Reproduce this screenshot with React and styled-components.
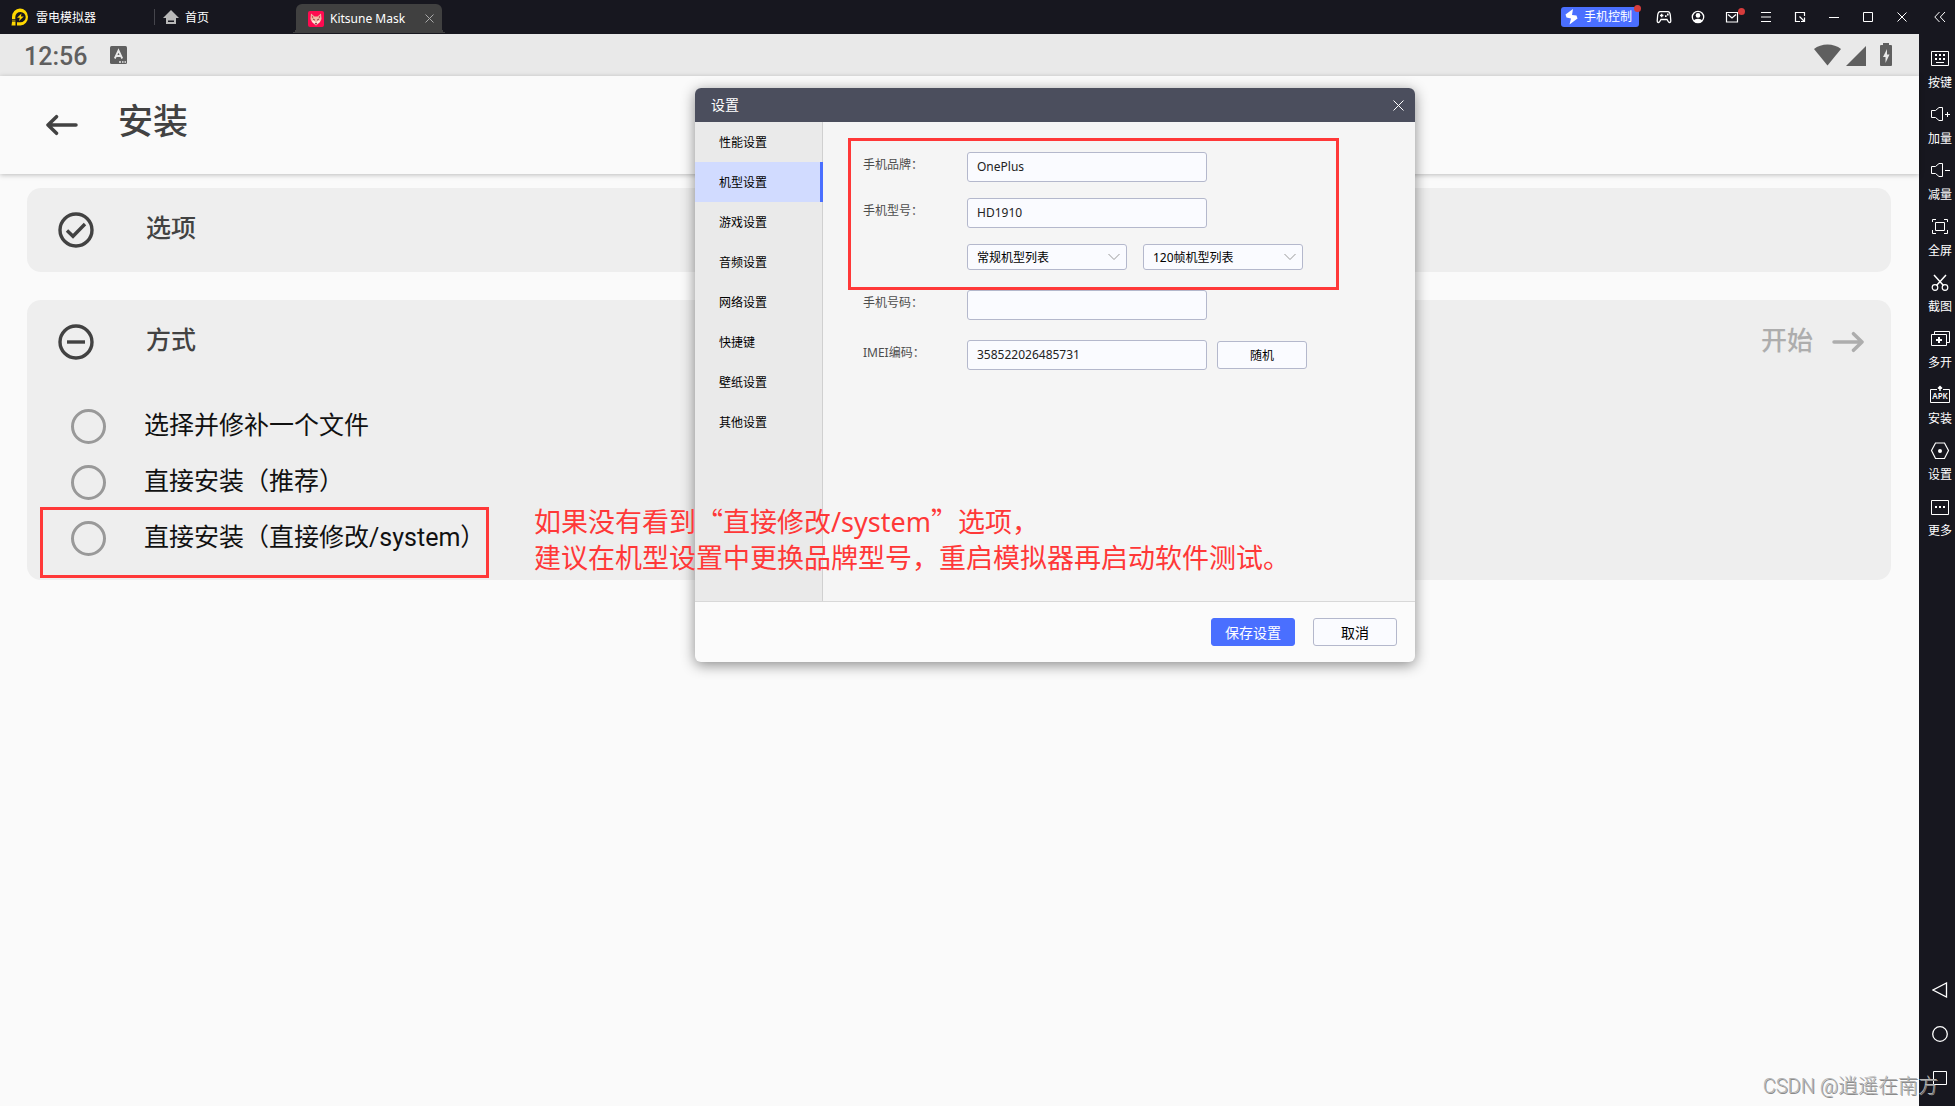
import React, { useState } from 'react';
import styled, { createGlobalStyle } from 'styled-components';

const GlobalStyle = createGlobalStyle`
  * {
    box-sizing: border-box;
  }
  body {
    margin: 0;
    background-color: #fafafa;
    font-family: 'Noto Sans', 'Noto Sans CJK SC', sans-serif;
    font-size: 12px;
  }
  button, input, select {
    font-family: inherit;
    font-size: inherit;
    margin: 0;
  }
  svg {
    display: block;
    flex-shrink: 0;
  }
`;

const Emulator = styled.div`
  position: relative;
  display: flex;
  min-height: 100vh;
  background-color: #17171f;
`;

const Main = styled.div`
  flex: 1;
  min-width: 0;
  display: flex;
  flex-direction: column;
`;

const TitleBar = styled.header`
  height: 34px;
  display: flex;
  align-items: center;
  justify-content: space-between;
  color: white;
`;

const Tabs = styled.div`
  display: flex;
  align-items: center;
  height: 34px;
`;

const Brand = styled.div`
  display: flex;
  align-items: center;
  gap: 7px;
  width: 155px;
  height: 16px;
  padding-left: 11px;
  border-right: 1px solid #45454c;
  line-height: 16px;
  span {
    padding-top: 2px;
  }
`;

const Tab = styled.button`
  display: flex;
  align-items: center;
  gap: 6px;
  width: 133px;
  height: 30px;
  padding: 0 8px;
  border: none;
  background: none;
  color: white;
  cursor: pointer;
`;

const ActiveTab = styled.div`
  position: relative;
  display: flex;
  align-items: center;
  align-self: flex-end;
  gap: 6px;
  width: 146px;
  height: 29px;
  margin: 0 0 1px 8px;
  padding: 0 8px 0 12px;
  border-radius: 6px 6px 0 0;
  background-color: #404040;
  white-space: nowrap;
  &::before, &::after {
    content: '';
    position: absolute;
    bottom: 0;
    width: 5px;
    height: 5px;
  }
  &::before {
    left: -5px;
    background: radial-gradient(circle at 0 0, transparent 5px, #404040 5px);
  }
  &::after {
    right: -5px;
    background: radial-gradient(circle at 100% 0, transparent 5px, #404040 5px);
  }
`;

const TabClose = styled.button`
  display: flex;
  margin-left: auto;
  padding: 0;
  border: none;
  background: none;
  color: #a9a9a9;
  cursor: pointer;
`;

const WindowActions = styled.div`
  display: flex;
  align-items: center;
`;

const PhoneControl = styled.button`
  position: relative;
  display: flex;
  align-items: center;
  gap: 6px;
  height: 20px;
  margin-right: 8px;
  padding: 0 7px 0 4px;
  border: none;
  border-radius: 3px;
  background-color: #4a6fff;
  color: white;
  line-height: 16px;
  cursor: pointer;
`;

const Dot = styled.span`
  position: absolute;
  top: ${({ $top }) => $top}px;
  right: ${({ $right }) => $right}px;
  width: 7px;
  height: 7px;
  border-radius: 50%;
  background-color: #d63c3c;
`;

const WindowButton = styled.button`
  position: relative;
  display: flex;
  align-items: center;
  justify-content: center;
  width: 34px;
  height: 34px;
  padding: 0;
  border: none;
  background: none;
  color: white;
  cursor: pointer;
`;

const Screen = styled.main`
  position: relative;
  flex: 1;
  background-color: #fafafa;
  font-family: Roboto, 'Noto Sans CJK SC', sans-serif;
`;

const StatusBar = styled.div`
  display: flex;
  align-items: center;
  height: 42px;
  padding: 0 27px 0 24px;
  background-color: #e9e9e9;
  color: #5f5f5f;
`;

const Clock = styled.span`
  margin-right: 23px;
  font-size: 25px;
  font-weight: 500;
  line-height: 30px;
  padding-top: 4px;
`;

const StatusIcons = styled.div`
  display: flex;
  align-items: center;
  margin-left: auto;
`;

const AppBar = styled.div`
  display: flex;
  align-items: center;
  gap: 40px;
  height: 98px;
  padding-left: 46px;
  color: #424242;
  box-shadow: 0 1px 5px rgba(0, 0, 0, 0.25);
`;

const IconButton = styled.button`
  display: flex;
  padding: 0;
  border: none;
  background: none;
  color: inherit;
  cursor: pointer;
`;

const PageTitle = styled.h1`
  margin: 0;
  padding-bottom: 4px;
  font-size: 35px;
  font-weight: 500;
  line-height: 44px;
`;

const Cards = styled.div`
  display: flex;
  flex-direction: column;
  gap: 28px;
  padding: 14px 28px 28px 27px;
`;

const Card = styled.section`
  border-radius: 14px;
  background-color: #eeeeee;
  color: #424242;
`;

const CardHeader = styled.div`
  display: flex;
  align-items: center;
  gap: 52px;
  height: 84px;
  padding: 0 27px 0 31px;
`;

const CardTitle = styled.h2`
  margin: 0;
  padding-bottom: 2px;
  font-size: 25px;
  font-weight: 500;
  line-height: 36px;
`;

const StartButton = styled.button`
  display: flex;
  align-items: center;
  gap: 19px;
  margin-left: auto;
  padding: 0;
  border: none;
  background: none;
  color: #adadad;
  && {
    font-size: 26px;
  }
  font-weight: 500;
  line-height: 36px;
  span {
    padding-bottom: 2px;
  }
`;

const Methods = styled.div`
  padding: 14px 0;
`;

const Method = styled.label`
  position: relative;
  display: flex;
  align-items: center;
  gap: 38px;
  height: 56px;
  padding-left: 44px;
  color: #111111;
  font-size: 25px;
  line-height: 36px;
`;

const Radio = styled.input`
  appearance: none;
  width: 35px;
  height: 35px;
  border: 3px solid #999999;
  border-radius: 50%;
  &:checked {
    background-color: #4a6fff;
    background-clip: content-box;
    padding: 6px;
  }
`;

const Highlight = styled.div`
  position: absolute;
  border: 3px solid #ff3838;
  pointer-events: none;
`;

const MethodHighlight = styled(Highlight)`
  top: -3px;
  bottom: -12px;
  left: 13px;
  width: 449px;
`;

const BrandHighlight = styled(Highlight)`
  top: -14px;
  right: 36px;
  bottom: -16px;
  left: -15px;
`;

const Dialog = styled.div`
  position: absolute;
  top: 54px;
  left: 695px;
  width: 720px;
  border-radius: 6px;
  overflow: hidden;
  background-color: #fbfbfb;
  box-shadow: 0 3px 14px rgba(0, 0, 0, 0.45);
  font-family: 'Noto Sans', 'Noto Sans CJK SC', sans-serif;
`;

const DialogHeader = styled.div`
  display: flex;
  align-items: center;
  justify-content: space-between;
  height: 34px;
  padding: 0 11px 0 16px;
  background-color: #4b4e5d;
  color: white;
`;

const DialogTitle = styled.h2`
  margin: 0;
  font-size: 14px;
  font-weight: 400;
  line-height: 20px;
`;

const DialogBody = styled.div`
  display: flex;
  height: 480px;
  border-bottom: 1px solid #d8d8d8;
`;

const Menu = styled.nav`
  display: flex;
  flex-direction: column;
  width: 128px;
  border-right: 1px solid #d0d0d0;
  background-color: #eaeaea;
`;

const MenuItem = styled.button`
  height: 40px;
  margin-right: -1px;
  padding: 0 0 0 24px;
  border: none;
  border-right: 3px solid ${({ $active }) => ($active ? '#4a6fff' : 'transparent')};
  background-color: ${({ $active }) => ($active ? '#d1dbff' : 'transparent')};
  background-clip: padding-box;
  color: black;
  text-align: left;
  cursor: pointer;
`;

const Form = styled.form`
  flex: 1;
  padding: 30px 40px;
  background-color: #f5f5f5;
`;

const FormGroup = styled.div`
  position: relative;
  display: flex;
  flex-direction: column;
  gap: 16px;
  margin-bottom: 16px;
`;

const FormRow = styled.div`
  display: flex;
  height: 30px;
  margin-bottom: ${({ $last }) => ($last ? 20 : 0)}px;
`;

const Label = styled.label`
  width: 104px;
  color: #4d4d4d;
  line-height: 26px;
`;

const TextInput = styled.input`
  width: 240px;
  height: 30px;
  padding: 0 9px 2px;
  border: 1px solid #b4b8cc;
  border-radius: 3px;
  background-color: #fafbff;
  color: #222222;
`;

const SelectWrap = styled.div`
  position: relative;
  display: flex;
  width: 160px;
  height: 26px;
  margin-right: 16px;
  svg {
    position: absolute;
    top: 9px;
    right: 7px;
    pointer-events: none;
  }
`;

const Select = styled.select`
  appearance: none;
  width: 100%;
  padding: 0 9px;
  border: 1px solid #b4b8cc;
  border-radius: 3px;
  background-color: #fafbff;
  color: black;
`;

const Button = styled.button`
  width: ${({ $wide }) => ($wide ? 90 : 84)}px;
  height: 28px;
  padding: 0;
  border: 1px solid ${({ $primary }) => ($primary ? '#4a6fff' : '#b4b8cc')};
  border-radius: 3px;
  background-color: ${({ $primary }) => ($primary ? '#4a6fff' : '#fafbff')};
  color: ${({ $primary }) => ($primary ? 'white' : 'black')};
  cursor: pointer;
`;

const RandomButton = styled(Button)`
  align-self: center;
  margin-left: 10px;
`;

const DialogFooter = styled.div`
  display: flex;
  align-items: center;
  justify-content: flex-end;
  gap: 18px;
  height: 60px;
  padding-right: 18px;
  ${Button} {
    font-size: 14px;
  }
`;

const Note = styled.p`
  position: absolute;
  top: 469px;
  left: 534px;
  margin: 0;
  color: #ff3838;
  font-family: 'Noto Sans CJK SC', sans-serif;
  font-size: 27px;
  line-height: 36px;
  white-space: nowrap;
`;

const Latin = styled.span`
  font-family: 'Noto Sans', sans-serif;
  line-height: 1;
`;

const Sidebar = styled.aside`
  display: flex;
  flex-direction: column;
  align-items: center;
  width: 36px;
  padding: 0 0 6px 6px;
  color: white;
`;

const Tools = styled.div`
  display: flex;
  flex-direction: column;
  gap: 13px;
  margin: 14px 0 auto;
`;

const Tool = styled.button`
  display: flex;
  flex-direction: column;
  align-items: center;
  gap: 7px;
  padding: 0;
  border: none;
  background: none;
  color: white;
  line-height: 16px;
  white-space: nowrap;
  cursor: pointer;
`;

const NavButton = styled(WindowButton)`
  width: 30px;
  height: 44px;
`;

const Watermark = styled.div`
  position: absolute;
  right: 17px;
  bottom: 6px;
  color: #b4b4b4;
  font-family: Roboto, 'Noto Sans CJK SC', sans-serif;
  font-size: 20px;
  font-weight: 300;
  line-height: 28px;
  text-shadow: 1px 1px #8a8a8a;
  white-space: nowrap;
  pointer-events: none;
`;

const Line = ({ size = 20, children, ...rest }) => (
  <svg width={size} height={size} viewBox={`0 0 ${size} ${size}`} fill="none" stroke="currentColor" {...rest}>
    {children}
  </svg>
);

const Logo = () => (
  <svg width="18" height="18" viewBox="0 0 18 18" fill="#ffd800">
    <path d="M1 9A8 8.500 0 1 1 9.500 17.500H6V14.300H9.500A5.200 5.200 0 1 0 4.300 9V11.200H1z" />
    <path d="M1 12.500h3.500v1H1zM1 14h3.500v3.500H0.500z" />
    <path d="M10.500 5.500L6 9.800H8.800L8 13L12.800 8.500H9.900z" />
  </svg>
);

const HomeIcon = () => (
  <svg width="16" height="15" viewBox="0 0 16 15" fill="#b8b8b8">
    <path fillRule="evenodd" d="M8 0L16 8H13V14H3V8H0zM5 10.500V12H11V10.500z" />
  </svg>
);

const FoxIcon = () => (
  <svg width="16" height="16" viewBox="0 0 16 16">
    <rect width="16" height="16" rx="2" fill="#ff0a50" />
    <path d="M3 2.500L6.500 5.500H9.500L13 2.500L13.500 8L12 11L8 14.500L4 11L2.500 8z" fill="#f3b9a6" />
    <path d="M3.800 4.200L5.600 6L4 7.400zM12.200 4.200L10.400 6L12 7.400z" fill="#c64a55" />
    <path d="M3.500 9.500L6.500 10L8 13L9.500 10L12.500 9.500L11.500 11.200L8 14.300L4.500 11.200z" fill="#ffe9dd" />
    <path d="M5 8L7 9.200M11 8L9 9.200M7.300 12.500H8.700L8 13.400z" stroke="#7c2636" strokeWidth="0.900" fill="#7c2636" />
  </svg>
);

const CrossIcon = ({ size = 10 }) => (
  <Line size={size}>
    <path d={`M0.500 0.500L${size - 0.5} ${size - 0.5}M${size - 0.5} 0.500L0.500 ${size - 0.5}`} />
  </Line>
);

const BoltIcon = () => (
  <svg width="13" height="16" viewBox="0 0 13 16" fill="currentColor">
    <path d="M8 0L0.500 5.500L1.500 8.500L6 9.500L4.500 15.500L12.500 9.500L11.500 6.500L7 6z" />
  </svg>
);

const windowIcons = [
  {
    name: '游戏',
    icon: (
      <Line size={16} strokeWidth="1.300">
        <path d="M4 2.700H12C13.500 2.700 14 4 14.300 6L14.800 12C14.800 13.800 13 14 12.200 12.500L11 10.500H5L3.800 12.500C3 14 1.200 13.800 1.200 12L1.700 6C2 4 2.500 2.700 4 2.700z" />
        <path d="M4 6.500H7.400M5.700 4.800V8.200" />
        <path d="M9 7.200H10.600M11 5.500H12.600" strokeWidth="1.800" />
      </Line>
    ),
  },
  {
    name: '账号',
    icon: (
      <Line size={14}>
        <circle cx="7" cy="7" r="5.700" strokeWidth="1.300" />
        <circle cx="7" cy="5.400" r="2.300" fill="currentColor" stroke="none" />
        <path d="M2.800 10.800C3.500 8 10.500 8 11.200 10.800C9 13.500 5 13.500 2.800 10.800z" fill="currentColor" stroke="none" />
      </Line>
    ),
  },
  {
    name: '消息',
    dot: true,
    icon: (
      <Line size={14} strokeWidth="1.200">
        <path d="M1.500 2.500H12.500V12H1.500zM3 4.500L7 8L11 4.500" />
      </Line>
    ),
  },
  { name: '菜单', icon: <Line size={10}><path d="M0 0.500H10M0 5H10M0 9.500H10" strokeWidth="1.200" /></Line> },
  {
    name: '小窗',
    icon: <Line size={12}><path d="M6 10.500H1.500V1.500H10.500V5M5.500 5.500L10 10M10.500 6.500V10.500H7" strokeWidth="1.200" /></Line>,
  },
  { name: '最小化', icon: <Line size={10}><path d="M0 5.500H10" /></Line> },
  { name: '最大化', icon: <Line size={10}><path d="M0.500 0.500H9.500V9.500H0.500z" /></Line> },
  { name: '关闭', icon: <CrossIcon /> },
];

const tools = [
  {
    name: '按键',
    icon: (
      <Line>
        <path d="M1.500 3.500H18.500V17.500H1.500zM6 14.500H14" />
        <path d="M5 7H7M9 7H11M13 7H15M5 11H7M9 11H11M13 11H15" strokeWidth="2" />
      </Line>
    ),
  },
  { name: '加量', icon: <Line><path d="M1.500 6.500H5.500L9 3.500H12.500V16.500H9L5.500 13.500H1.500zM15 10.500H20M17.500 8V13" /></Line> },
  { name: '减量', icon: <Line><path d="M1.500 6.500H5.500L9 3.500H12.500V16.500H9L5.500 13.500H1.500zM15 10.500H20" /></Line> },
  {
    name: '全屏',
    icon: <Line><path d="M5.500 6.500H14.500V14.500H5.500zM2.500 6V3.500H6M14 3.500H17.500V6M17.500 14V17.500H14M6 17.500H2.500V14" /></Line>,
  },
  {
    name: '截图',
    icon: (
      <Line strokeWidth="1.200">
        <circle cx="5" cy="15.500" r="2.800" />
        <circle cx="15" cy="15.500" r="2.800" />
        <path d="M4 3L13.500 13.500M16 3L6.500 13.500" strokeWidth="1.500" />
      </Line>
    ),
  },
  {
    name: '多开',
    icon: (
      <Line>
        <path d="M1.500 6.500H16.500V17.500H1.500zM4.500 6V3.500H19.500V14.500H17" />
        <path d="M6 12H12M9 9V15" strokeWidth="2" />
      </Line>
    ),
  },
  {
    name: '安装',
    icon: (
      <Line>
        <path d="M7 5.500H0.500V18.500H19.500V5.500H13" />
        <path d="M10 7V3M8 4.500L10 2.500L12 4.500" strokeWidth="1.500" />
        <text x="10" y="15" fill="currentColor" stroke="none" fontSize="8" fontWeight="600" textAnchor="middle">APK</text>
      </Line>
    ),
  },
  {
    name: '设置',
    icon: (
      <Line strokeWidth="1.200">
        <path d="M5.500 3H14.500L18.500 10.500L14.500 18.500H5.500L1.500 10.500z" />
        <circle cx="10" cy="11" r="2" fill="currentColor" stroke="none" />
      </Line>
    ),
  },
  {
    name: '更多',
    icon: (
      <Line>
        <path d="M1.500 4.500H18.500V18.500H1.500z" />
        <path d="M5 11H7M9 11H11M13 11H15" strokeWidth="2" />
      </Line>
    ),
  },
];

const menu = ['性能设置', '机型设置', '游戏设置', '音频设置', '网络设置', '快捷键', '壁纸设置', '其他设置'];

const methods = ['选择并修补一个文件', '直接安装（推荐）', '直接安装（直接修改/system）'];

const Chevron = () => (
  <svg width="12" height="8" viewBox="0 0 12 8" fill="none" stroke="#999999">
    <path d="M0.500 1L6 6.500L11.500 1" />
  </svg>
);

const Arrow = ({ flip }) => (
  <svg width="32" height="22" viewBox="0 0 32 22" fill="none" stroke="currentColor" strokeWidth="3.500" strokeLinecap="round">
    <path d={flip ? 'M2 11H30M21.500 2.700L30 11L21.500 19.300' : 'M30 11H2M10.500 2.700L2 11L10.500 19.300'} strokeLinejoin="round" />
  </svg>
);

const StepIcon = ({ done }) => (
  <svg width="36" height="36" viewBox="0 0 36 36" fill="none" stroke="currentColor" strokeWidth="3.400">
    <circle cx="18" cy="18" r="16" />
    <path d={done ? 'M9 18.500L15 24.300L27 12' : 'M9 18H27'} />
  </svg>
);

const SettingsDialog = () => {
  const [active, setActive] = useState('机型设置');

  return (
    <Dialog role="dialog" aria-labelledby="settings-title">
      <DialogHeader>
        <DialogTitle id="settings-title">设置</DialogTitle>
        <IconButton aria-label="关闭设置"><CrossIcon size={11} /></IconButton>
      </DialogHeader>
      <DialogBody>
        <Menu>
          {menu.map((item) => (
            <MenuItem key={item} $active={item === active} onClick={() => setActive(item)}>{item}</MenuItem>
          ))}
        </Menu>
        <Form>
          <FormGroup>
            <FormRow>
              <Label htmlFor="brand">手机品牌：</Label>
              <TextInput id="brand" defaultValue="OnePlus" />
            </FormRow>
            <FormRow>
              <Label htmlFor="model">手机型号：</Label>
              <TextInput id="model" defaultValue="HD1910" />
            </FormRow>
            <FormRow>
              <Label as="span" />
              <SelectWrap>
                <Select aria-label="常规机型列表"><option>常规机型列表</option></Select>
                <Chevron />
              </SelectWrap>
              <SelectWrap>
                <Select aria-label="120帧机型列表"><option>120帧机型列表</option></Select>
                <Chevron />
              </SelectWrap>
            </FormRow>
            <BrandHighlight />
          </FormGroup>
          <FormRow $last>
            <Label htmlFor="phone">手机号码：</Label>
            <TextInput id="phone" />
          </FormRow>
          <FormRow>
            <Label htmlFor="imei">IMEI编码：</Label>
            <TextInput id="imei" defaultValue="358522026485731" />
            <RandomButton type="button" $wide>随机</RandomButton>
          </FormRow>
        </Form>
      </DialogBody>
      <DialogFooter>
        <Button $primary>保存设置</Button>
        <Button>取消</Button>
      </DialogFooter>
    </Dialog>
  );
};

const App = () => (
  <Emulator lang="zh-CN">
    <GlobalStyle />
    <Main>
      <TitleBar>
        <Tabs>
          <Brand><Logo /><span>雷电模拟器</span></Brand>
          <Tab><HomeIcon />首页</Tab>
          <ActiveTab>
            <FoxIcon />
            Kitsune Mask
            <TabClose aria-label="关闭标签"><CrossIcon size={9} /></TabClose>
          </ActiveTab>
        </Tabs>
        <WindowActions>
          <PhoneControl>
            <BoltIcon />
            手机控制
            <Dot $top={-2} $right={-2} />
          </PhoneControl>
          {windowIcons.map(({ name, icon, dot }) => (
            <WindowButton key={name} aria-label={name}>
              {icon}
              {dot && <Dot $top={8} $right={4} />}
            </WindowButton>
          ))}
        </WindowActions>
      </TitleBar>
      <Screen>
        <StatusBar>
          <Clock>12:56</Clock>
          <svg width="17" height="18" viewBox="0 0 17 18">
            <rect width="17" height="18" rx="1.500" fill="currentColor" />
            <path d="M4.800 12.500L8.500 4.500L12.200 12.500M6 10H11" fill="none" stroke="#e9e9e9" strokeWidth="1.800" />
            <path d="M9 16H11M12 16H13.500M14.500 16H16" stroke="#e9e9e9" strokeWidth="1.500" />
          </svg>
          <StatusIcons>
            <svg width="78" height="24" viewBox="0 0 78 24" fill="currentColor">
              <path d="M0 6C7 0 20 0 27 6L13.500 22.500z" />
              <path d="M52 3V23H32z" />
              <path fillRule="evenodd" d="M69 0H75V2H77Q78 2 78 3V22Q78 23 77 23H67Q66 23 66 22V3Q66 2 67 2H69zM73 6L69 14H71.500V20L75.500 11.500H73z" />
            </svg>
          </StatusIcons>
        </StatusBar>
        <AppBar>
          <IconButton aria-label="返回"><Arrow /></IconButton>
          <PageTitle>安装</PageTitle>
        </AppBar>
        <Cards>
          <Card>
            <CardHeader>
              <StepIcon done />
              <CardTitle>选项</CardTitle>
            </CardHeader>
          </Card>
          <Card>
            <CardHeader>
              <StepIcon />
              <CardTitle>方式</CardTitle>
              <StartButton disabled><span>开始</span><Arrow flip /></StartButton>
            </CardHeader>
            <Methods>
              {methods.map((method, index) => (
                <Method key={method}>
                  <Radio type="radio" name="method" />
                  <span>{method}</span>
                  {index === 2 && <MethodHighlight />}
                </Method>
              ))}
            </Methods>
          </Card>
        </Cards>
        <SettingsDialog />
        <Note>
          如果没有看到“直接修改<Latin>/system</Latin>”选项，<br />
          建议在机型设置中更换品牌型号，重启模拟器再启动软件测试。
        </Note>
      </Screen>
    </Main>
    <Sidebar>
      <WindowButton aria-label="收起">
        <Line size={12}><path d="M5.500 1L0.800 6L5.500 11M11 1L6.300 6L11 11" /></Line>
      </WindowButton>
      <Tools>
        {tools.map(({ name, icon }) => (
          <Tool key={name}>{icon}{name}</Tool>
        ))}
      </Tools>
      <NavButton aria-label="返回键"><Line size={16} strokeWidth="1.300"><path d="M14.500 1V15L1 8z" /></Line></NavButton>
      <NavButton aria-label="主页键"><Line size={16} strokeWidth="1.300"><circle cx="8" cy="8" r="7.300" /></Line></NavButton>
      <NavButton aria-label="任务键"><Line size={14}><path d="M0.500 0.500H13.500V13.500H0.500z" /></Line></NavButton>
    </Sidebar>
    <Watermark>CSDN @逍遥在南方</Watermark>
  </Emulator>
);

export default App;
